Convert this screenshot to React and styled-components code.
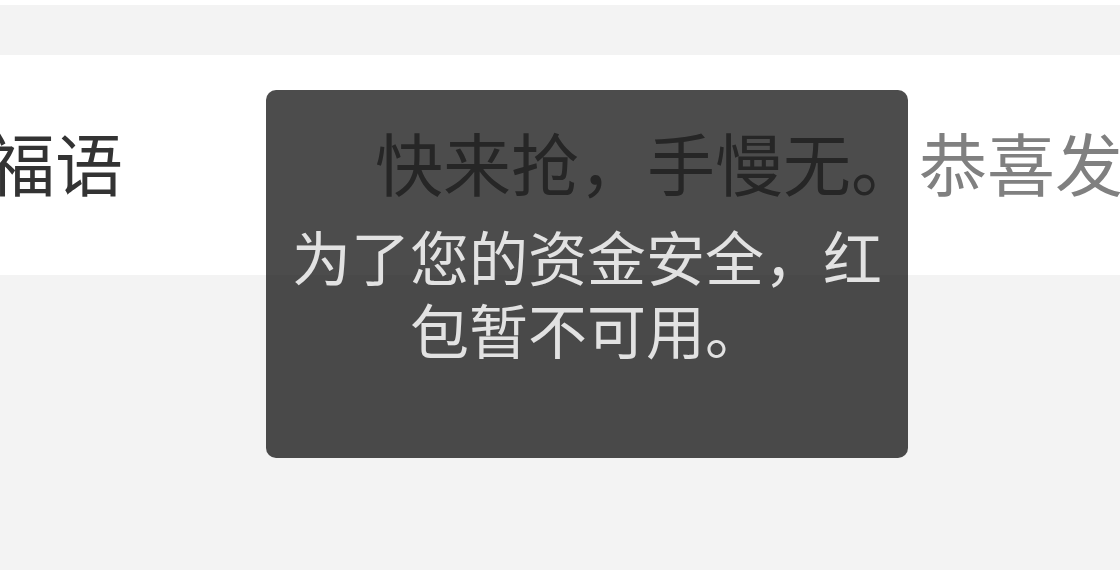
import React from "react";
import styled, { createGlobalStyle } from "styled-components";

const Global = createGlobalStyle`
  html, body {
    margin: 0;
    padding: 0;
    background: #f3f3f3;
    overflow: hidden;
  }
  body {
    font-family: "Noto Sans CJK SC", "Noto Sans", sans-serif;
  }
`;

const Screen = styled.div`
  position: relative;
  width: 1120px;
  height: 570px;
  overflow: hidden;
  background: #f3f3f3;
  display: flex;
  flex-direction: column;
`;

const TopStrip = styled.div`
  height: 5px;
  background: #ffffff;
  flex: none;
`;

const Spacer = styled.div`
  height: ${(p) => p.$h}px;
  flex: none;
`;

const Row = styled.div`
  height: 220px;
  box-sizing: border-box;
  padding-bottom: 8px;
  flex: none;
  background: #ffffff;
  display: flex;
  align-items: center;
  overflow: hidden;
  font-size: 68px;
  white-space: nowrap;
`;

const Label = styled.div`
  flex: 0 0 456px;
  margin-left: -81px;
  color: #333333;
`;

const Value = styled.div`
  flex: none;
  color: #808080;
`;

const Toast = styled.div`
  position: absolute;
  left: 266px;
  top: 90px;
  width: 642px;
  height: 368px;
  box-sizing: border-box;
  border-radius: 10px;
  background: rgba(0, 0, 0, 0.7);
  padding-top: 129px;
  color: #e2e2e2;
  font-size: 59px;
  line-height: 73px;
  text-align: center;
`;

export default function App() {
  return (
    <>
      <Global />
      <Screen>
        <TopStrip />
        <Spacer $h={50} />
        <Row>
          <Label>祝福语</Label>
          <Value>快来抢，手慢无。恭喜发财，大吉大利</Value>
        </Row>
        <Toast>
          为了您的资金安全，红
          <br />
          包暂不可用。
        </Toast>
      </Screen>
    </>
  );
}
